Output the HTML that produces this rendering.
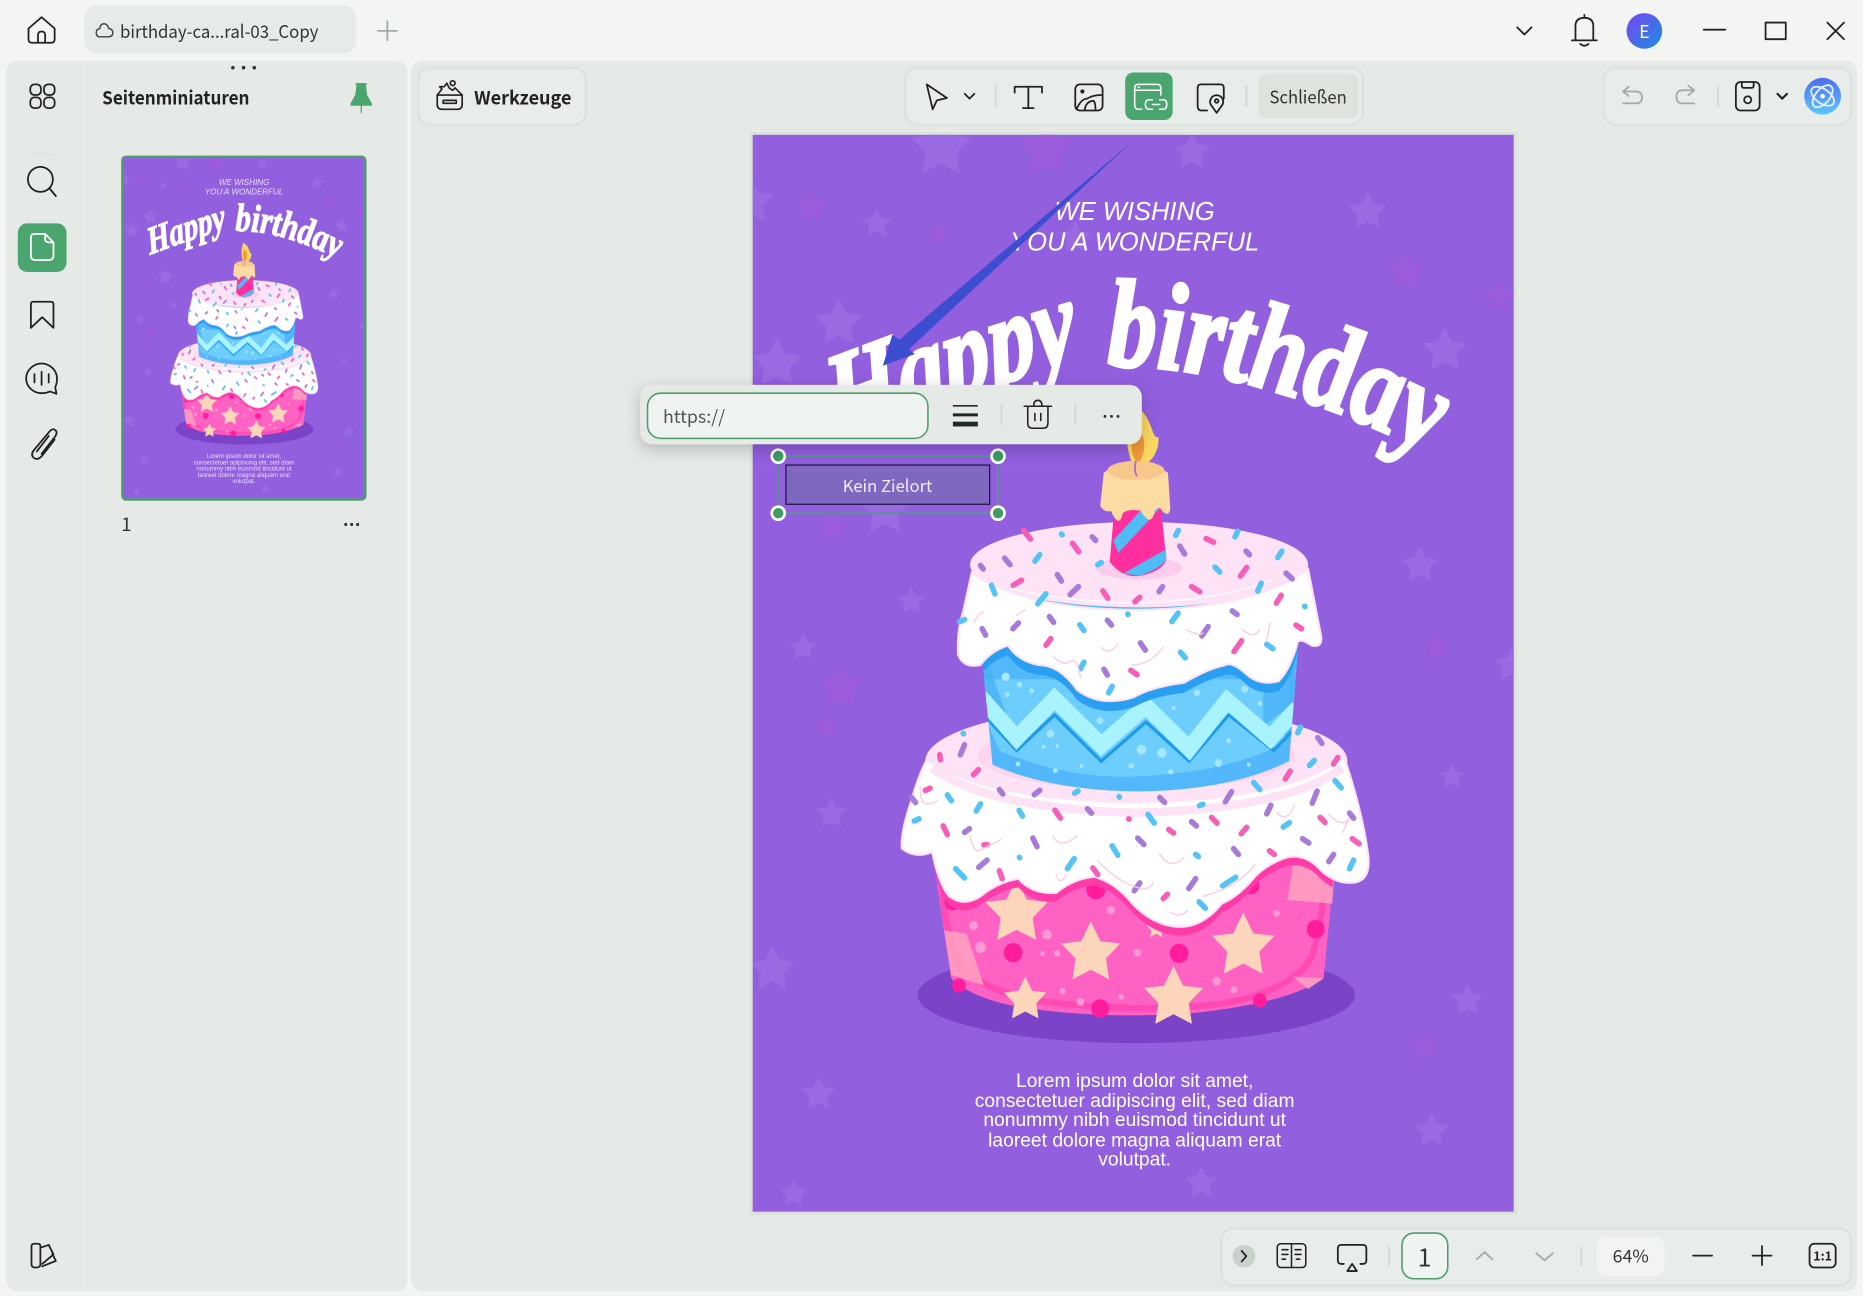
<!DOCTYPE html>
<html><head><meta charset="utf-8"><style>
html,body{margin:0;padding:0;background:#f2f5f2;width:1863px;height:1296px;overflow:hidden}
svg{display:block;font-family:"Noto Sans CJK SC","Liberation Sans",sans-serif}
.i{fill:none;stroke:#222;stroke-width:1.5;stroke-linecap:round;stroke-linejoin:round}
.g{fill:none;stroke:#a3aaa5;stroke-width:1.5;stroke-linecap:round;stroke-linejoin:round}
.d{stroke:#d3d8d4;stroke-width:1.5}
.s{font-family:"Liberation Sans",sans-serif;fill:#fff}
.h{font-family:"Liberation Serif",serif;font-style:italic;font-weight:bold;fill:#fff;stroke:#fff;stroke-width:3}
</style></head><body>
<svg width="1863" height="1296" viewBox="0 0 1568 1091" preserveAspectRatio="none" xmlns="http://www.w3.org/2000/svg">
<defs>
<polygon id="st" points="0,-10 3.1,-3.8 9.5,-3.1 4.9,1.6 5.9,8.1 0,5.1 -5.9,8.1 -4.9,1.6 -9.5,-3.1 -3.1,-3.8"/>
<clipPath id="pc"><rect x="633.5" y="113.5" width="640.5" height="906.5"/></clipPath>
<clipPath id="tc"><path d="M295 500L325 800Q500 875 760 875Q1020 870 1185 790L1212 460L1000 300L400 300Z"/></clipPath>
<clipPath id="bc"><path d="M150 1040L205 1400Q270 1460 420 1483Q640 1515 900 1498Q1180 1470 1285 1400L1315 1100L1210 1040Z"/></clipPath>
<filter id="sh" x="-10%" y="-40%" width="120%" height="190%"><feDropShadow dx="0" dy="4" stdDeviation="7" flood-color="#000" flood-opacity=".22"/></filter>
<linearGradient id="av" x1="0" y1="0" x2="1" y2="1"><stop offset="0" stop-color="#7a45f5"/><stop offset="1" stop-color="#1a8fdc"/></linearGradient>
<linearGradient id="ai" x1="0" y1="0" x2="0" y2="1"><stop offset="0" stop-color="#4f6cf0"/><stop offset="1" stop-color="#5cc8fa"/></linearGradient>
<path id="p1" d="M951 372 Q1097 330 1248 298 L1500 250"/>
<path id="p2" d="M1195 308 Q1345 306 1538 380 L1800 520"/>
<path id="bi" d="M62 1035Q58 990 90 900Q110 830 135 785Q300 900 742 905Q1170 900 1345 780Q1400 940 1415 1060Q1420 1120 1380 1130Q1320 1140 1270 1090Q1230 1050 1180 1060Q1130 1075 1090 1110Q1040 1170 990 1190Q940 1250 880 1255Q800 1260 730 1190Q680 1130 620 1115Q560 1120 510 1160Q440 1165 400 1120Q340 1130 290 1170Q240 1200 200 1170Q170 1140 150 1045Q100 1065 62 1035Z"/>
<path id="ti" d="M225 490Q222 420 240 370L265 260Q420 365 750 365Q1090 360 1240 250L1278 440Q1282 472 1250 465Q1220 445 1210 455Q1190 530 1155 565Q1100 580 1060 545Q1020 510 1000 520Q950 530 880 570Q790 580 735 610Q640 640 570 590Q520 520 460 520Q400 510 370 465Q320 480 290 520Q240 530 225 490Z"/>
<g id="art">
 <rect x="633.5" y="113.5" width="640.5" height="906.5" fill="#925fdf"/>
 <g clip-path="url(#pc)">
 <g fill="#a277e6" opacity=".5">
  <use href="#st" transform="translate(792,124) scale(2.7)"/><use href="#st" transform="translate(1003,128) scale(1.6)"/>
  <use href="#st" transform="translate(1151,178) scale(1.7)"/><use href="#st" transform="translate(738,188) scale(1.3)"/>
  <use href="#st" transform="translate(905,200) scale(1.4)"/><use href="#st" transform="translate(706,272) scale(2.1)"/>
  <use href="#st" transform="translate(654,306) scale(2.2)"/><use href="#st" transform="translate(1216,295) scale(2)"/>
  <use href="#st" transform="translate(632,170) scale(2)"/><use href="#st" transform="translate(767,506) scale(1.2)"/>
  <use href="#st" transform="translate(676,545) scale(1.2)"/><use href="#st" transform="translate(700,685) scale(1.4)"/>
  <use href="#st" transform="translate(650,816) scale(2)"/><use href="#st" transform="translate(689,921) scale(1.5)"/>
  <use href="#st" transform="translate(1195,476) scale(1.6)"/><use href="#st" transform="translate(1222,654) scale(1.1)"/>
  <use href="#st" transform="translate(1235,842) scale(1.4)"/><use href="#st" transform="translate(1205,952) scale(1.5)"/>
  <use href="#st" transform="translate(1011,996) scale(1.4)"/><use href="#st" transform="translate(1272,560) scale(1.5)"/>
  <use href="#st" transform="translate(745,430) scale(2.2)"/><use href="#st" transform="translate(668,1005) scale(1.2)"/>
 </g>
 <g fill="#a858dc" opacity=".5">
  <use href="#st" transform="translate(880,126) scale(2.4)"/><use href="#st" transform="translate(683,174) scale(1.5)"/>
  <use href="#st" transform="translate(790,197) scale(1)"/><use href="#st" transform="translate(708,578) scale(2)"/>
  <use href="#st" transform="translate(696,611) scale(1.1)"/><use href="#st" transform="translate(1183,228) scale(1.7)"/>
  <use href="#st" transform="translate(1210,545) scale(1.2)"/><use href="#st" transform="translate(1200,880) scale(1.4)"/>
  <use href="#st" transform="translate(1262,250) scale(1.4)"/><use href="#st" transform="translate(700,445) scale(1.4)"/>
 </g>
 </g>
 <g transform="translate(741,404) scale(.2903 .2997)">
  <ellipse cx="742" cy="1447" rx="634" ry="135" fill="#7b44c8"/>
  <path d="M150 1040L205 1400Q270 1460 420 1483Q640 1515 900 1498Q1180 1470 1285 1400L1315 1100L1210 1040Z" fill="#ff62c2"/>
  <path d="M178 1130Q190 1290 230 1360Q300 1440 470 1465Q760 1500 1000 1470Q1200 1430 1250 1340Q1280 1250 1290 1110" fill="none" stroke="#ff3aa9" stroke-width="18" opacity=".6"/>
  <path d="M1200 1060L1315 1120L1310 1190L1180 1180ZM185 1265L250 1275L300 1420L205 1390ZM1285 1400L1195 1395L1240 1430Z" fill="#ffa8c0" opacity=".8"/>
  <g fill="#fcd5bb">
   <use href="#st" transform="translate(395,1215) scale(9.5)"/><use href="#st" transform="translate(610,1330) scale(9)"/>
   <use href="#st" transform="translate(1052,1310) scale(9.5)"/><use href="#st" transform="translate(850,1455) scale(9)"/>
   <use href="#st" transform="translate(420,1460) scale(6.5)"/><use href="#st" transform="translate(800,1260) scale(3)"/>
  </g>
  <g fill="#ff1d9d">
   <circle cx="385" cy="1328" r="27"/><circle cx="866" cy="1330" r="27"/><circle cx="625" cy="1150" r="28"/><circle cx="1075" cy="1140" r="24"/><circle cx="1262" cy="1262" r="26"/><circle cx="210" cy="1185" r="24"/><circle cx="637" cy="1485" r="26"/><circle cx="228" cy="1420" r="20"/><circle cx="1100" cy="1462" r="20"/>
  </g>
  <g fill="#ff98d4">
   <circle cx="270" cy="1252" r="13"/><circle cx="290" cy="1313" r="16"/><circle cx="483" cy="1277" r="14"/><circle cx="745" cy="1328" r="11"/><circle cx="512" cy="1330" r="9"/><circle cx="470" cy="1330" r="7"/><circle cx="668" cy="1208" r="12"/><circle cx="975" cy="1408" r="12"/><circle cx="1148" cy="1218" r="10"/><circle cx="580" cy="1466" r="11"/><circle cx="528" cy="1436" r="9"/><circle cx="1025" cy="1432" r="10"/><circle cx="698" cy="1452" r="8"/>
  </g>
  <g clip-path="url(#bc)"><use href="#bi" transform="translate(0,24)" fill="#ff3aa9"/></g>
  <ellipse cx="742" cy="790" rx="612" ry="155" fill="#fde3f5"/>
  <use href="#bi" fill="#fff" stroke="#fde3f5" stroke-width="6"/>
  <path d="M150 810Q320 925 742 935Q1170 925 1340 810" fill="none" stroke="#fde3f5" stroke-width="24"/>
  <ellipse cx="742" cy="775" rx="460" ry="95" fill="#fcd5ee"/>
  <path d="M295 500L325 800Q500 875 760 875Q1020 870 1185 790L1212 460L1000 300L400 300Z" fill="#52b8fb"/>
  <g clip-path="url(#tc)">
  <path d="M345 760Q560 850 790 830Q1020 815 1170 740L1190 560L300 560L310 680Z" fill="#6dcdfd"/>
  <path d="M300 480L380 700L300 640ZM1110 600L1200 510L1195 630L1110 690Z" fill="#48b2f7" opacity=".8"/>
  <path d="M300 660L395 760L505 660L640 790L770 680L895 790L1010 660L1140 760L1200 700" fill="none" stroke="#1f9ae9" stroke-width="9"/>
  <path d="M290 610L395 725L505 615L640 745L770 635L895 755L1005 620L1130 725L1210 640" fill="none" stroke="#a9f3ff" stroke-width="46"/>
  <use href="#ti" transform="translate(0,28)" fill="#2a9ef0"/>
  </g>
  <g fill="#a4e6fe"><circle cx="363" cy="553" r="12"/><circle cx="403" cy="575" r="8"/><circle cx="438" cy="593" r="7"/><circle cx="367" cy="603" r="7"/><circle cx="918" cy="598" r="9"/><circle cx="1056" cy="588" r="10"/><circle cx="1100" cy="628" r="7"/><circle cx="636" cy="676" r="10"/><circle cx="493" cy="713" r="11"/><circle cx="757" cy="758" r="14"/><circle cx="816" cy="767" r="14"/><circle cx="980" cy="795" r="11"/><circle cx="727" cy="803" r="8"/><circle cx="583" cy="803" r="6"/><circle cx="507" cy="817" r="7"/><circle cx="399" cy="798" r="7"/><circle cx="842" cy="820" r="8"/><circle cx="1068" cy="800" r="6"/><circle cx="1010" cy="733" r="7"/><circle cx="473" cy="750" r="6"/><circle cx="513" cy="747" r="5"/><circle cx="850" cy="640" r="6"/></g>
  <ellipse cx="750" cy="238" rx="490" ry="120" fill="#fde3f5"/>
  <use href="#ti" fill="#fff" stroke="#fde3f5" stroke-width="6"/>
  <path d="M375 305Q550 345 750 345Q970 340 1140 280" fill="none" stroke="#fff" stroke-width="5" opacity=".7"/>
  <ellipse cx="750" cy="248" rx="125" ry="32" fill="#fbcdea"/>
  <g fill="none" stroke-linecap="round" stroke-width="16">
   <path stroke="#55c3f5" d="M525 152l2 2M856 156l8-14M1028 160l8-16M1152 218l12-18M448 228l14-18M970 245l14 14M1094 312l10-22M322 296l10 24M456 348l24-28M630 238l10-6M717 377l1 1M845 398l18-24M578 407l12 16M230 398l14-6M1230 355l1 1M1120 462l18 12M870 484l14 16M580 530l10-18M662 598l10-18M1210 710l8-16M240 712l1 1M1244 802l14-14M1082 850l18 20M1318 845l18 20M563 880l10-6M692 890l1 1M925 915l10-4M194 885l12 16M278 930l12-20M402 928l10 16M776 940l18 24M98 958l14-6M1168 975l18-12M672 1028l16 26M914 1052l8 6M403 1060l1 1M542 1092l20-28M218 1092l26 26M1360 1092l12-24M992 1140l38-24M924 1185l18 18"/>
   <path stroke="#f55fb8" d="M415 142l20 24M557 178l18 24M944 165l22 10M385 296l24-14M1044 270l18-24M645 312l14 20M738 342l14-12M902 300l24 14M1148 346l14-22M1205 408l16 10M480 464l14-18M1025 482l22-30M726 535l18 12M172 772l2 14M1314 798l12-18M1174 840l14-22M270 828l14-14M130 872l14-6M506 928l16 22M720 952l1 1M960 948l16 16M836 982l14 10M1046 994l16-18M1275 948l14 14M1368 1008l20 14M182 972l12 24M300 1025l10 0M345 1098l8 22M616 1090l14 18M820 1176l12-12M1128 1042l14 10"/>
   <path stroke="#a87bd8" d="M614 160l10 10M868 186l14 22M1060 200l10 10M290 240l8 10M360 220l16 18M513 266l12 18M550 322l24-22M808 314l10-14M1176 262l18 16M1020 368l14 10M490 384l12 16M658 394l12 14M384 418l16-16M295 418l10 18M932 438l18-26M754 458l14 20M648 532l10 16M232 772l12-28M1268 724l12 16M345 870l10 12M446 884l16-12M810 892l14 14M600 924l12 12M1000 904l18-28M1252 908l14-34M1120 938l12-24M902 960l14 12M1360 936l12 14M90 892l12 14M244 990l14-10M442 1006l12 24M746 1006l18 18M1224 1008l18 12M1024 1036l14 16M1300 1072l14-20M285 1088l24-20M736 1154l16-22M894 1148l20-28"/>
   <path stroke="#f8cfe2" stroke-width="4" d="M270 400q20-30 30-30M395 380l25-15M500 495q30 30 50 15t30 45M640 470q20 25 50-10M730 520q50 0 90-50M885 420q40 20 50 10M1050 420q30 30 50 0M1130 400l-10 50M115 860q0 50 20 50t30-10M260 1000q10 50 30 40t60-30M500 1000q20 40 70 0M810 1050q30 50 70 10M630 1070q50 50 100 70t60-10M1150 935q30 30 50-20M1300 940q40 40 60 10l-20 40M1085 1080q-40 60-150 90M840 1215q30 15 50-5M510 1110q10 30 30 0"/>
  </g>
  <path d="M685 0L665 230Q700 275 750 270Q815 258 829 225L805 0Z" fill="#ff2f9f"/>
  <path d="M688 40L726 30L710 70L682 90ZM770 70L815 50L810 80L690 205L675 170ZM828 195L829 225Q800 255 750 270L705 262Z" fill="#4fbcf5"/>
 </g>
 <path d="M953 340C972 350 968 370 975 368C976 382 966 394 955 393C949 385 945 365 953 340Z" fill="#fbd860"/>
 <path d="M956 356C964 366 966 380 958 390C952 386 950 370 956 356Z" fill="#f29a3c"/>
 <path d="M929 398Q955 380 983 398L985 428Q984 436 978 430Q976 425 972 430Q969 445 960 430Q950 428 945 432Q942 446 935 430Q930 432 926 426Z" fill="#fddca4"/>
 <ellipse cx="956" cy="396" rx="24" ry="8" fill="#f8c78c"/>
 <path d="M956 388q-2 8 1 13" fill="none" stroke="#a870c8" stroke-width="1.5"/>
</g>
</defs>

<rect x="0" y="0" width="1568" height="1091" fill="#f2f5f2"/>
<rect x="5" y="51" width="338" height="1036" rx="10" fill="#e6eae7"/>
<rect x="346" y="51" width="1217" height="1036" rx="10" fill="#e6eae7"/>
<rect x="67" y="51" width="1" height="1036" fill="#e0e4e1"/>
<rect x="71" y="5" width="229" height="40" rx="10" fill="#e7ebe8"/>

<!-- title bar -->
<path class="i" d="M24 24L35 14.500L46 24V33Q46 36 43 36H27Q24 36 24 33ZM32 36V29.500Q32 26.500 35 26.500Q38 26.500 38 29.500V36"/>
<path class="i" style="stroke:#444;stroke-width:1.2" d="M84 31H91Q95 31 95 27.500Q95 24.500 91.500 24Q90.500 20 87.500 20Q84.500 20 84 24Q81 24.500 81 27.500Q81 31 84 31Z"/>
<text x="101" y="32" font-size="15" fill="#333" textLength="167" lengthAdjust="spacingAndGlyphs">birthday-ca...ral-03_Copy</text>
<path class="g" d="M326 18V34M318 26H334"/>
<path class="i" d="M1277 23L1283 29L1289 23"/>
<path class="i" d="M1326 33V22Q1326 15 1333.500 15Q1341 15 1341 22V33M1323 34H1344M1330 37Q1333.500 40 1337 37M1333.500 15V12.500"/>
<circle cx="1384" cy="26" r="15" fill="url(#av)"/>
<text x="1384" y="32" font-size="15" fill="#fff" text-anchor="middle">E</text>
<path class="i" d="M1434 25H1452"/>
<rect class="i" x="1486" y="19" width="17" height="14" stroke-linecap="butt"/>
<path class="i" d="M1538 19L1552 33M1552 19L1538 33"/>

<!-- left rail -->
<g class="i">
 <rect x="25.500" y="71" width="9" height="9" rx="3.500"/><rect x="37" y="71" width="9" height="9" rx="3.500"/><rect x="25.500" y="82" width="9" height="9" rx="3.500"/><rect x="37" y="82" width="9" height="9" rx="3.500"/>
 <circle cx="34" cy="151" r="10.500"/><path d="M42 159L47 165"/>
 <path d="M26 256Q26 254 28 254H43Q45 254 45 256V276L35.500 267L26 276Z"/>
 <path d="M35 306C28 306 22 312 22 318.500C22 325.500 28 331 35 331C38 331 40 330.500 42 329.500L47.500 331.500L46.500 326C47.500 324 48 321.500 48 318.500C48 312 42 306 35 306Z"/>
 <path d="M29 315V322M35 313V324M41 315V322"/>
 <path d="M46 370L36 383Q32 388 28.500 385.500Q25.500 383 28.500 379L41 364Q44 360 46.500 362Q49 364 46 368L35 382M31 380L41 367"/>
 <path d="M29 1047H32Q34 1047 34 1049V1064Q34 1067 31 1067H29Q26.500 1067 26.500 1064V1049Q26.500 1047 29 1047Z"/>
 <path d="M35 1050L41 1048L45 1056L35.500 1064M35.500 1066L47 1061.500L44 1055"/>
</g>
<rect x="15" y="188" width="41" height="41" rx="8" fill="#4aa66e"/>
<path d="M29 197H38L45 204V215Q45 219 41 219H30Q26 219 26 215V200Q26 197 29 197ZM38 197V201Q38 204 41 204H45" fill="none" stroke="#fff" stroke-width="1.5" stroke-linejoin="round"/>
<rect x="25" y="130" width="20" height="1" fill="#dfe3e0"/>

<!-- sidebar header -->
<g fill="#333"><circle cx="196" cy="57" r="1.500"/><circle cx="205" cy="57" r="1.500"/><circle cx="214" cy="57" r="1.500"/></g>
<text x="86" y="88" font-size="15.500" font-weight="700" fill="#222" textLength="124" lengthAdjust="spacingAndGlyphs">Seitenminiaturen</text>
<path d="M299 70H309L308 72L309 80L313 87V89H295V87L299 80L300 72ZM303.500 89H304.500V95H303.500Z" fill="#4aa66e"/>

<!-- thumbnail -->
<rect x="103" y="132" width="204.500" height="288.500" rx="3" fill="#925fdf" stroke="#4d9c6c" stroke-width="2"/>
<g transform="translate(104,133) scale(.3153) translate(-633.500,-113.500)">
 <use href="#art"/>
 <text class="h" font-size="105" transform="scale(.74 1)"><textPath href="#p1">Happy</textPath></text>
 <text class="h" font-size="105" transform="scale(.78 1)"><textPath href="#p2">birthday</textPath></text>
 <g class="s" font-style="italic" font-size="21.500" text-anchor="middle" opacity=".8"><text x="955" y="185">WE WISHING</text><text x="955" y="211">YOU A WONDERFUL</text></g>
 <g class="s" font-size="16.200" text-anchor="middle" opacity=".8"><text x="955" y="915">Lorem ipsum dolor sit amet,</text><text x="955" y="932">consectetuer adipiscing elit, sed diam</text><text x="955" y="948">nonummy nibh euismod tincidunt ut</text><text x="955" y="965">laoreet dolore magna aliquam erat</text><text x="955" y="981">volutpat.</text></g>
</g>
<text x="102" y="447" font-size="16" fill="#333">1</text>
<g fill="#333"><circle cx="291" cy="441.500" r="1.300"/><circle cx="296" cy="441.500" r="1.300"/><circle cx="301" cy="441.500" r="1.300"/></g>

<!-- main page -->
<rect x="631" y="111" width="646" height="912" fill="#000" opacity=".03"/>
<use href="#art"/>
<g class="s" font-style="italic" font-size="21.500" text-anchor="middle"><text x="955" y="185">WE WISHING</text><text x="955" y="211">YOU A WONDERFUL</text></g>
<g class="s" font-size="16.200" text-anchor="middle"><text x="955" y="915">Lorem ipsum dolor sit amet,</text><text x="955" y="932">consectetuer adipiscing elit, sed diam</text><text x="955" y="948">nonummy nibh euismod tincidunt ut</text><text x="955" y="965">laoreet dolore magna aliquam erat</text><text x="955" y="981">volutpat.</text></g>
<text class="h" font-size="105" transform="scale(.74 1)"><textPath href="#p1">Happy</textPath></text>
<text class="h" font-size="105" transform="scale(.78 1)"><textPath href="#p2">birthday</textPath></text>
<path d="M953 119L757 286L751 282L743 308L770 298L765 294Z" fill="#3d4dcf"/>

<!-- link annotation -->
<rect x="655" y="384" width="185" height="48" fill="none" stroke="#5f8d98" stroke-width="1.800"/>
<rect x="661.500" y="391.500" width="171.500" height="33" fill="#7f68c0" stroke="#1a1040" stroke-width="1"/>
<text x="747" y="414" font-size="14" fill="#f1ecf9" text-anchor="middle">Kein Zielort</text>
<g fill="#3f9c62" stroke="#fff" stroke-width="2.200"><circle cx="655" cy="384" r="5.500"/><circle cx="840" cy="384" r="5.500"/><circle cx="655" cy="432" r="5.500"/><circle cx="840" cy="432" r="5.500"/></g>

<!-- floating link toolbar -->
<rect x="539" y="324" width="422" height="50" rx="10" fill="#e6eae7" filter="url(#sh)"/>
<rect x="545" y="331" width="236" height="38" rx="11" fill="#f0f4f1" stroke="#4d9c6c" stroke-width="1.300"/>
<text x="558" y="356" font-size="15" fill="#555">https://</text>
<rect x="802" y="341" width="21" height="1.300" fill="#222"/><rect x="802" y="348" width="21" height="2.500" fill="#222"/><rect x="802" y="355" width="21" height="4" fill="#1d2a22"/>
<path class="d" d="M843 340V358M905 340V358"/>
<path class="i" d="M862 342H885M865 342V356Q865 360.500 869 360.500H878Q882 360.500 882 356V342M870 342Q870 337 873.500 337Q877 337 877 342M871 348V354M876 348V354" style="stroke-width:1.300"/>
<g fill="#333"><circle cx="930" cy="350.500" r="1.200"/><circle cx="935.500" cy="350.500" r="1.200"/><circle cx="941" cy="350.500" r="1.200"/></g>

<!-- Werkzeuge -->
<rect x="352" y="57" width="141" height="48" rx="10" fill="#e8ecea" stroke="#dee2df" stroke-width="2"/>
<g class="i" style="stroke-width:1.400"><path d="M368 80H389V88Q389 92 385 92H372Q368 92 368 88ZM373 84.500H384V87H373Z"/><path d="M368 80L372 75L370 73L374 73L376 70L378 74L381 76L383 74L389 80"/><circle cx="381" cy="70" r="2"/></g>
<text x="399" y="88" font-size="15.500" font-weight="700" fill="#222" textLength="82" lengthAdjust="spacingAndGlyphs">Werkzeuge</text>

<!-- centre toolbar -->
<rect x="762" y="57" width="385" height="48" rx="10" fill="#e8ecea" stroke="#dee2df" stroke-width="2"/>
<path class="i" d="M780 71L797 82.500L788.500 84.500L785 92Z"/>
<path class="i" d="M812 79L816 83L820 79"/>
<path class="d" d="M838 72V90M1049 72V90"/>
<path class="i" d="M854 78V73H877V78M865.500 73V91M861 91H870"/>
<g class="i"><rect x="905" y="71" width="23" height="22" rx="4"/><circle cx="911" cy="77" r="1" fill="#222"/><path d="M906 92Q910 83 915 83Q920 80 927 80M913 92Q914 86 919 85Q922 84 922 92"/></g>
<rect x="947" y="61" width="40" height="40" rx="7" fill="#4aa66e"/>
<g fill="none" stroke="#fff" stroke-width="1.300" stroke-linecap="round" stroke-linejoin="round"><path d="M977 80V74Q977 71 974 71H958Q955 71 955 74V88Q955 92 958 92H961M955 76H977M958 73.500H959"/><path d="M970 84H967Q964 84 964 88Q964 92 967 92H970M976 84H979Q982 84 982 88Q982 92 979 92H976M970 88H976"/></g>
<g class="i"><path d="M1030 83V74Q1030 71 1027 71H1011Q1008 71 1008 74V89Q1008 93 1011 93H1016"/><path d="M1024 95L1019 88A5.500 5.500 0 1 1 1029 88Z"/><circle cx="1024" cy="85" r="1.500"/></g>
<rect x="1059" y="62" width="84" height="38" rx="7" fill="#dfe3dd"/>
<text x="1101" y="87" font-size="15" fill="#333" text-anchor="middle" textLength="65" lengthAdjust="spacingAndGlyphs">Schließen</text>

<!-- right toolbar -->
<rect x="1350" y="57" width="208" height="48" rx="10" fill="#e8ecea" stroke="#dee2df" stroke-width="2"/>
<path class="g" d="M1371 73L1366 77L1371 81M1366 77H1377Q1382 77 1382 82Q1382 87 1377 87H1366"/>
<path class="g" d="M1421 72L1426 76L1421 80M1426 76H1416Q1411 76 1411 81Q1411 87 1416 87H1426"/>
<path class="d" d="M1446 72V90"/>
<g class="i"><rect x="1461" y="69" width="20" height="24" rx="4"/><path d="M1466 69V72Q1466 74 1468 74H1474Q1476 74 1476 72V69"/><circle cx="1471" cy="84" r="3"/></g>
<path class="i" d="M1496 79L1500 83L1504 79" style="stroke-width:1.800"/>
<circle cx="1534" cy="81" r="15.500" fill="url(#ai)"/>
<g fill="none" stroke="#e6f4ff" stroke-width="1.500"><ellipse cx="1534" cy="81" rx="11" ry="6" transform="rotate(35 1534 81)"/><ellipse cx="1534" cy="81" rx="11" ry="6" transform="rotate(-50 1534 81)"/></g>
<circle cx="1534" cy="81" r="2" fill="#fff"/>

<!-- bottom toolbar -->
<rect x="1028" y="1034" width="530" height="48" rx="10" fill="#e8ecea" stroke="#dee2df" stroke-width="2"/>
<circle cx="1047" cy="1057.500" r="9.500" fill="#c9d3cc"/>
<path class="i" d="M1045 1053L1049 1057.500L1045 1062"/>
<g class="i" style="stroke-width:1.300"><rect x="1075" y="1047" width="24" height="20" rx="3"/><path d="M1087 1047V1067M1079 1052H1084M1079 1056H1084M1079 1060H1082M1090 1052H1095M1090 1056H1095M1091 1060H1094"/></g>
<path class="i" d="M1131 1064H1129Q1126 1064 1126 1061V1051Q1126 1048 1129 1048H1147Q1150 1048 1150 1051V1061Q1150 1064 1147 1064H1145M1134 1070L1138 1064L1142 1070Z"/>
<path class="d" d="M1169 1049V1066"/>
<rect x="1180" y="1038" width="38.500" height="38.500" rx="10" fill="#f0f4f1" stroke="#4d9c6c" stroke-width="1.300"/>
<text x="1199" y="1066" font-size="21" fill="#333" text-anchor="middle">1</text>
<path class="g" d="M1243 1060L1249.500 1054L1256 1060M1293 1055L1300 1061L1307 1055"/>
<path class="d" d="M1331 1049V1066"/>
<rect x="1344" y="1041" width="57" height="33" rx="8" fill="#f2f4f2"/>
<text x="1372.500" y="1063" font-size="15" fill="#333" text-anchor="middle">64%</text>
<path class="i" d="M1425 1057H1441M1483 1049V1065M1475 1057H1491"/>
<rect class="i" x="1523" y="1047" width="22" height="20" rx="4"/>
<text x="1534" y="1061" font-size="10.500" font-weight="700" fill="#222" text-anchor="middle">1:1</text>
</svg>
</body></html>
